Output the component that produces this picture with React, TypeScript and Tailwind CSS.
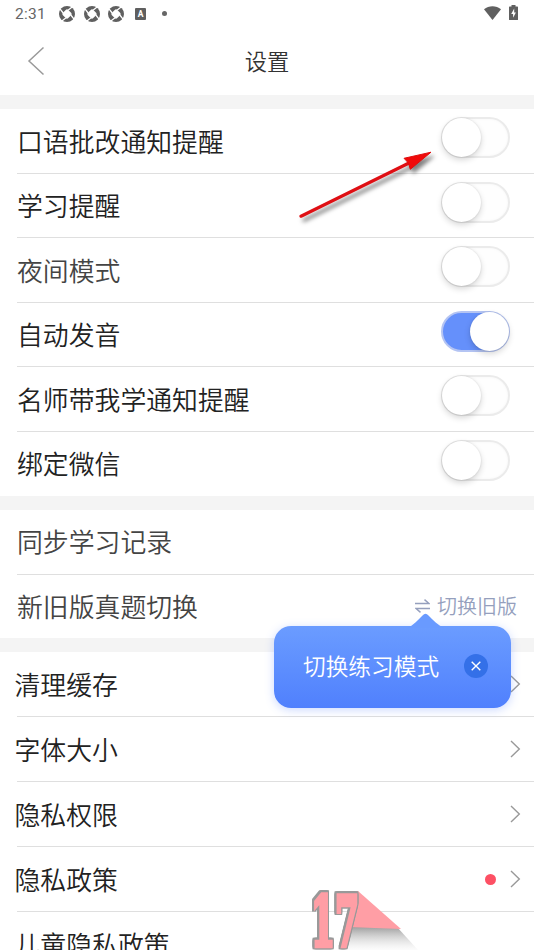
import clsx from "clsx";

interface ToggleItem {
  label: string;
  on: boolean;
  muted?: boolean;
}

interface LinkItem {
  label: string;
  dot?: boolean;
  chevron?: boolean;
}

const toggles: ToggleItem[] = [
  { label: "口语批改通知提醒", on: false },
  { label: "学习提醒", on: false },
  { label: "夜间模式", on: false, muted: true },
  { label: "自动发音", on: true },
  { label: "名师带我学通知提醒", on: false },
  { label: "绑定微信", on: false },
];

const links: LinkItem[] = [
  { label: "清理缓存", chevron: true },
  { label: "字体大小", chevron: true },
  { label: "隐私权限", chevron: true },
  { label: "隐私政策", chevron: true, dot: true },
  { label: "儿童隐私政策" },
];

function ShutterIcon() {
  return (
    <svg width="16" height="16" viewBox="0 0 16 16" fill="none">
      <circle cx="8" cy="8" r="8" fill="#606060" />
      <rect x="4.2" y="4.2" width="7.6" height="7.6" rx="1.8" fill="#fff" transform="rotate(45 8 8)" />
      <path d="M4.2 7 .8 2.6M9 4.2 13.4.8M11.8 9 15.2 13.4M7 11.8 2.6 15.2" stroke="#fff" strokeWidth="1.3" />
    </svg>
  );
}

function StatusBar() {
  return (
    <div className="flex h-7 shrink-0 items-center pr-4 pl-[15px] text-[#666]">
      <span className="mt-0.5 w-[44px] font-[Roboto] text-[15.5px] leading-none font-normal tracking-[0.3px]">2:31</span>
      <div className="flex gap-[8.5px]">
        <ShutterIcon />
        <ShutterIcon />
        <ShutterIcon />
      </div>
      <svg className="ml-[11px]" width="11" height="12" viewBox="0 0 11 12">
        <rect width="11" height="12" rx="1" fill="#5f5f5f" />
        <text x="5.5" y="9" textAnchor="middle" fontSize="8.5" fontWeight="700" fontFamily="Roboto" fill="#fff">
          A
        </text>
      </svg>
      <span className="mb-px ml-4 size-[5px] rounded-full bg-[#666]" />
      <svg className="mb-[3px] ml-auto" width="17" height="14" viewBox="0 0 17 14">
        <path d="M0 3.2C4.8-.9 12.2-.9 17 3.2L8.5 14Z" fill="#606060" />
      </svg>
      <svg className="mb-[3px] ml-2" width="9" height="15" viewBox="0 0 9 15">
        <path d="M2.5 0h4v1.4H8.4a.6.6 0 0 1 .6.6V14.4a.6.6 0 0 1-.6.6H.6a.6.6 0 0 1-.6-.6V2a.6.6 0 0 1 .6-.6h1.9Z" fill="#606060" />
        <path d="M5.2 3.6 2.2 9h1.9v3.8L6.9 7.4H5.2Z" fill="#fff" />
      </svg>
    </div>
  );
}

function Header() {
  return (
    <header className="grid h-[67px] shrink-0 grid-cols-3 items-center pb-0.5">
      <svg className="ml-[27px]" width="18" height="30" viewBox="0 0 18 30" fill="none">
        <path d="M16.5 1.5 2 15 16.5 28.5" stroke="#9a9a9a" strokeWidth="1.5" />
      </svg>
      <h1 className="text-center text-[22.3px] text-[#333]">设置</h1>
    </header>
  );
}

function Toggle({ on }: { on: boolean }) {
  return (
    <div
      className={clsx(
        "mb-[7px] flex h-[41px] w-[69px] rounded-full border-2",
        on
          ? "justify-end border-[#b4c4f3] bg-[#6590fb]"
          : "border-[#ebebeb] bg-[#fefefe] shadow-[inset_0_0_3px_rgba(0,0,0,0.04)]",
      )}
    >
      <span
        className={clsx(
          "-my-px size-[39px] rounded-full bg-white shadow-[0_3px_6px_rgba(0,0,0,0.16),0_0_2px_rgba(0,0,0,0.13)]",
          on ? "-mr-px" : "-ml-px",
        )}
      />
    </div>
  );
}

function Divider() {
  return <div className="absolute right-0 bottom-0 left-[17px] h-px bg-[#dfdfdf]" />;
}

function Gap() {
  return <div className="h-3.5 shrink-0 bg-[#f4f4f4]" />;
}

function Chevron() {
  return (
    <svg width="11" height="18" viewBox="0 0 11 18" fill="none">
      <path d="m1 1 8.3 8L1 17" stroke="#999" strokeWidth="1.4" />
    </svg>
  );
}

function ModeTooltip() {
  return (
    <div className="absolute top-[51.5px] right-[23px] h-[82px] w-[237px]">
      <svg className="absolute -top-[13px] left-[134px]" width="36" height="15" viewBox="0 0 36 15">
        <path d="M0 15C5 12 10 7 14.5 2.4Q17.5-.8 20.5 2.4C25 7 30 12 36 15Z" fill="#699aff" />
      </svg>
      <div className="flex h-full items-center rounded-[17px] bg-linear-to-b from-[#6b9cff] to-[#5080fd] pr-[23px] pb-0.5 pl-[29px] shadow-[0_2px_10px_rgba(85,130,255,0.3)]">
        <span className="text-[22.7px] whitespace-nowrap text-white">切换练习模式</span>
        <span className="ml-auto flex size-[24px] items-center justify-center rounded-full bg-[#3470e8]">
          <svg width="10" height="10" viewBox="0 0 10 10">
            <path d="m.7.7 8.6 8.6M9.3.7.7 9.3" stroke="#fff" strokeWidth="1.4" />
          </svg>
        </span>
      </div>
    </div>
  );
}

// Red pointer drawn over the first switch
function Pointer() {
  return (
    <svg
      className="pointer-events-none absolute top-[140px] left-[290px] drop-shadow-[3px_4px_2px_rgba(0,0,0,0.5)]"
      width="150"
      height="90"
      viewBox="0 0 150 90"
    >
      <path d="M11 76.2 118 23.5" stroke="#df0f14" strokeWidth="3.2" strokeLinecap="round" />
      <path d="M141 12.2 114 18.3 118.5 23 120.3 29.3Z" fill="#f00a0a" stroke="#e00d0d" strokeWidth="1" />
    </svg>
  );
}

function Watermark() {
  return (
    <svg className="pointer-events-none absolute top-[886px] left-[306px]" width="116" height="64" viewBox="0 0 116 64">
      <defs>
        <linearGradient id="fade" x1="0" y1="0" x2="0" y2="1">
          <stop offset="0" stopColor="#858585" stopOpacity="0.9" />
          <stop offset="0.8" stopColor="#ddd" stopOpacity="0.4" />
          <stop offset="1" stopColor="#eee" stopOpacity="0.2" />
        </linearGradient>
      </defs>
      <path d="M44 39 91 41 112 64H42Z" fill="url(#fade)" />
      <path d="M52 5 95 43 42 41 46 6Z" fill="#ff9ea5" />
      <text
        className="[filter:drop-shadow(1.5px_0_0_#999)_drop-shadow(-1.5px_0_0_#999)_drop-shadow(0_1.5px_0_#999)_drop-shadow(0_-1.5px_0_#999)]"
        x="5"
        y="59.5"
        fontFamily="DejaVu Serif"
        fontWeight="700"
        fontSize="69"
        textLength="48"
        lengthAdjust="spacingAndGlyphs"
        fill="#ff9ea5"
        stroke="#ff9ea5"
        strokeWidth="4.5"
      >
        17
      </text>
    </svg>
  );
}

export default function App() {
  return (
    <div className="relative flex h-[950px] w-[534px] flex-col overflow-hidden bg-white font-['Noto_Sans_CJK_SC',sans-serif] text-[25.85px] leading-none font-[350] text-[#222]">
      <StatusBar />
      <Header />
      <Gap />

      <section className="shrink-0">
        {toggles.map((item, i) => (
          <div key={item.label} className="relative flex h-[64.5px] items-center justify-between pr-6 pl-[17px]">
            <span className={clsx("pb-px", item.muted && "text-[#444]")}>{item.label}</span>
            <Toggle on={item.on} />
            {i < toggles.length - 1 && <Divider />}
          </div>
        ))}
      </section>

      <Gap />

      <section className="relative z-10 shrink-0 text-[#444]">
        <div className="relative flex h-[64.5px] items-center pb-0.5 pl-[17px]">
          同步学习记录
          <Divider />
        </div>
        <div className="relative flex h-[63.5px] items-center justify-between pr-[17px] pl-[17px]">
          <span className="pb-px">新旧版真题切换</span>
          <span className="flex items-center gap-[7px] pb-px text-[20px] text-[#959fbd]">
            <svg width="15" height="14" viewBox="0 0 15 14" fill="none" stroke="currentColor" strokeWidth="1.4">
              <path d="M0 4.5h14L9.5.6M15 9.5H1l4.5 3.9" />
            </svg>
            切换旧版
          </span>
          <ModeTooltip />
        </div>
      </section>

      <Gap />

      <section className="shrink-0">
        {links.map((item) => (
          <div key={item.label} className="relative flex h-[65px] items-center pr-[13px] pb-px pl-[14.5px]">
            <span className="pb-px">{item.label}</span>
            <div className="ml-auto flex items-center gap-[14px]">
              {item.dot && <span className="size-[11px] rounded-full bg-[#fd5064]" />}
              {item.chevron && <Chevron />}
            </div>
            <Divider />
          </div>
        ))}
      </section>

      <Watermark />
      <Pointer />
    </div>
  );
}
